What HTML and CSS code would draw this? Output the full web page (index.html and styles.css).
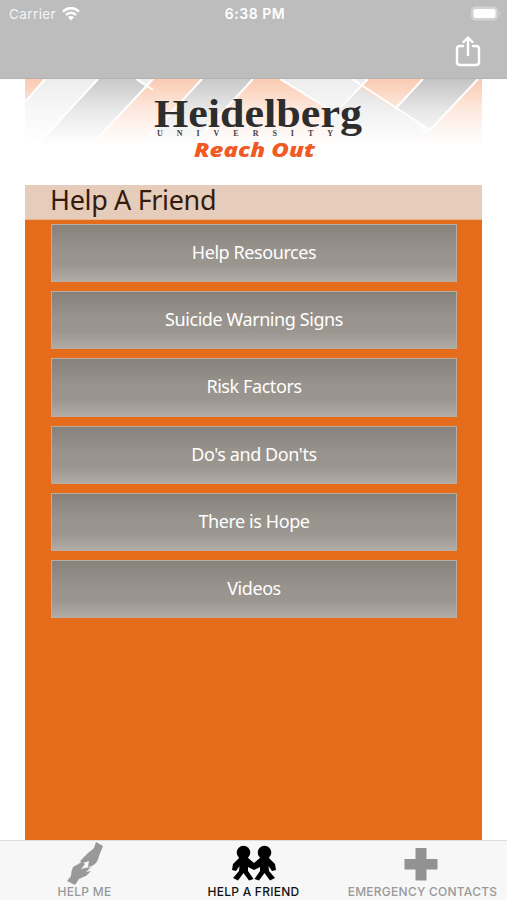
FILE: index.html
```html
<!DOCTYPE html>
<html lang="en">
<head>
    <meta charset="UTF-8">
    <meta name="viewport" content="width=device-width, initial-scale=1.0">
    <title>Help A Friend</title>
    <link rel="stylesheet" href="styles.css">
</head>
<body>
    <header class="topbar">
        <div class="status">
            <div class="carrier">
                <span>Carrier</span>
                <svg width="18" height="14" viewBox="0 0 18 14" fill="none" stroke="#fff" stroke-width="2.4">
                    <path d="M1 4.700C5.500 0 12.500 0 17 4.700"/>
                    <path d="M4 8C6.700 5 11.300 5 14 8"/>
                    <path d="M9 13.600L5.900 10.300Q9 7.700 12.100 10.300Z" fill="#fff" stroke="none"/>
                </svg>
            </div>
            <span class="time">6:38 PM</span>
            <svg class="battery" width="31" height="15" viewBox="0 0 31 15">
                <rect x="1" y=".5" width="27" height="14" rx="4.500" fill="#d2d2d2"/>
                <path d="M29 5v5q3-2.500 0-5" fill="#d2d2d2"/>
                <rect x="3.500" y="3" width="22" height="9" rx="2" fill="#fff"/>
            </svg>
        </div>
        <svg class="share" width="26" height="32" viewBox="0 0 26 32" fill="none" stroke="#fff" stroke-width="2.400" stroke-linecap="round" stroke-linejoin="round">
            <path d="M8 10H5Q2 10 2 13V26Q2 29 5 29H21Q24 29 24 26V13Q24 10 21 10H18"/>
            <path d="M13 19V2M8.500 6L13 1.600L17.500 6"/>
        </svg>
    </header>

    <main class="page">
        <svg class="banner" width="457" height="106" viewBox="0 0 457 106">
            <defs>
                <linearGradient id="fade" x1="0" y1="0" x2="0" y2="1">
                    <stop offset="0" stop-color="#fff" stop-opacity="0"/>
                    <stop offset=".3" stop-color="#fff" stop-opacity=".6"/>
                    <stop offset=".62" stop-color="#fff"/>
                </linearGradient>
            </defs>
            <rect width="457" height="106" fill="#ededed"/>
            <path d="M0 0H20L0 23Z" fill="#fbcbb2"/>
            <path d="M73 0H111L128 11L40 106H-25Z" fill="#c9c9c9"/>
            <path d="M128 0H177L80 106H29Z" fill="#fbcbb2"/>
            <path d="M177 0H228L130 106H80Z" fill="#c9c9c9"/>
            <path d="M228 0H255L430 106H130Z" fill="#fbcbb2"/>
            <path d="M255 0H343L306 31Z" fill="#ededed"/>
            <path d="M334 8L300 40L360 106H430L390 40Z" fill="#dcdcdc"/>
            <path d="M343 0H398L370 30L334 8Z" fill="#fbcbb2"/>
            <path d="M398 0H453L405 51L370 30Z" fill="#c4c4c4"/>
            <path d="M453 0H457V106H353Z" fill="#fbcbb2"/>
            <path d="M20 0L0 23M73 0L-25 106M111 0L128 11M128 0L29 106M177 0L80 106M228 0L130 106M255 0L320 40M327 0L405 51M343 0L306 38M398 0L370 30M453 0L405 51" fill="none" stroke="#fff" stroke-width="2"/>
            <rect width="457" height="106" fill="url(#fade)"/>
            <text class="name" x="129" y="48" textLength="208" lengthAdjust="spacingAndGlyphs">Heidelberg</text>
            <text class="univ" x="132" y="57" textLength="176">UNIVERSITY</text>
            <text class="reach" x="169" y="78" textLength="121" lengthAdjust="spacingAndGlyphs">Reach Out</text>
        </svg>
        <h1>Help A Friend</h1>
        <nav class="menu">
            <a class="item">Help Resources</a>
            <a class="item">Suicide Warning Signs</a>
            <a class="item">Risk Factors</a>
            <a class="item">Do's and Don'ts</a>
            <a class="item">There is Hope</a>
            <a class="item">Videos</a>
        </nav>
    </main>

    <footer class="tabs">
        <a class="tab">
            <svg width="40" height="44" viewBox="0 0 40 44" fill="#999">
                <path d="M31 1L38 5L34 15Q33 22 27 25L23 26L24 20L18 22Q14 22 16 19L23 12Q27 9 29 7Z"/>
                <path d="M2 40L10 44L14 38Q18 36 21 35L26 30L21 31L26 26L20 27L16 28L20 23Q18 21 15 22L8 26Q6 30 6 35Z"/>
            </svg>
            <span>HELP ME</span>
        </a>
        <a class="tab active">
            <svg width="46" height="44" viewBox="0 0 46 44">
                <circle cx="12.500" cy="11.500" r="6.800"/>
                <circle cx="33.500" cy="11.500" r="6.800"/>
                <path d="M9 16H16L23 22L30 16H37L44 23L45 29L41 30L37.500 25L38 30L44 37L39 39.500L33.500 32L28 39.500L23.500 38L29 30V26L23 29L17 26V30L22.500 38L18 39.500L12.500 32L7 39.500L2 37L8 30L8.500 25L5 30L1 29L2 23Z"/>
            </svg>
            <span>HELP A FRIEND</span>
        </a>
        <a class="tab">
            <svg class="cross" width="34" height="44" viewBox="0 0 34 44" fill="#929292">
                <path d="M11.500 7H22.500V18H33.500V28.500H22.500V39.500H11.500V28.500H.5V18H11.500Z"/>
            </svg>
            <span>EMERGENCY CONTACTS</span>
        </a>
    </footer>
</body>
</html>
```

FILE: styles.css
```css
*{
    padding: 0;
    margin: 0;
    box-sizing: border-box;
}
body{
    height: 900px;
    display: flex;
    flex-direction: column;
    overflow: hidden;
    background-color: #fff;
    font-family: "Noto Sans", sans-serif;
}
svg{
    display: block;
    flex-shrink: 0;
}
.topbar{
    height: 79px;
    flex-shrink: 0;
    background-color: #bdbdbd;
    border-bottom: 1px solid #b3b3b3;
    color: #fff;
    font-family: Inter, sans-serif;
}
.status{
    height: 27px;
    display: grid;
    grid-template-columns: 1fr auto 1fr;
    align-items: center;
    padding: 0 6px 0 9px;
    font-size: 13.5px;
    letter-spacing: 0.4px;
}
.carrier{
    display: flex;
    align-items: center;
    gap: 6px;
    color: #f4f4f4;
}
.time{
    font-size: 14px;
    font-weight: 600;
    letter-spacing: 0.5px;
}
.battery{
    justify-self: end;
}
.share{
    margin: 9px 26px 0 auto;
}
.page{
    width: 457px;
    margin-left: 25px;
    flex: 1;
    background-color: #e46c1b;
}
.name{
    font: bold 40px "Liberation Serif", serif;
    fill: #2d2d2d;
}
.univ{
    font: bold 8px "Liberation Serif", serif;
    fill: #444;
}
.reach{
    font: italic 800 20px "Open Sans", sans-serif;
    fill: #f05a24;
}
h1{
    height: 35px;
    padding-left: 25px;
    background-color: #e6ccbb;
    border-bottom: 1px solid #e9b48c;
    color: #351b0d;
    font-size: 27px;
    font-weight: 400;
    line-height: 30px;
    letter-spacing: -0.35px;
}
.menu{
    display: flex;
    flex-direction: column;
    gap: 9px;
    padding: 4px 25px 0 26px;
}
.item{
    height: 58.2px;
    border: 1px solid #b9aca2;
    background: linear-gradient(#87817b, #98938c 45%, #9a958e 70%, #b0aba5);
    color: #fff;
    font-size: 18px;
    line-height: 54px;
    letter-spacing: -0.42px;
    text-align: center;
}
.tabs{
    height: 60px;
    flex-shrink: 0;
    display: grid;
    grid-template-columns: repeat(3, 169px);
    background-color: #f7f7f7;
    border-top: 1px solid #ddd;
    color: #999;
    font: 500 12px/13px Inter, sans-serif;
    letter-spacing: 0.25px;
}
.tab{
    display: flex;
    flex-direction: column;
    align-items: center;
    white-space: nowrap;
}
.cross{
    margin-right: 3px;
}
.active{
    color: #111;
}
```
